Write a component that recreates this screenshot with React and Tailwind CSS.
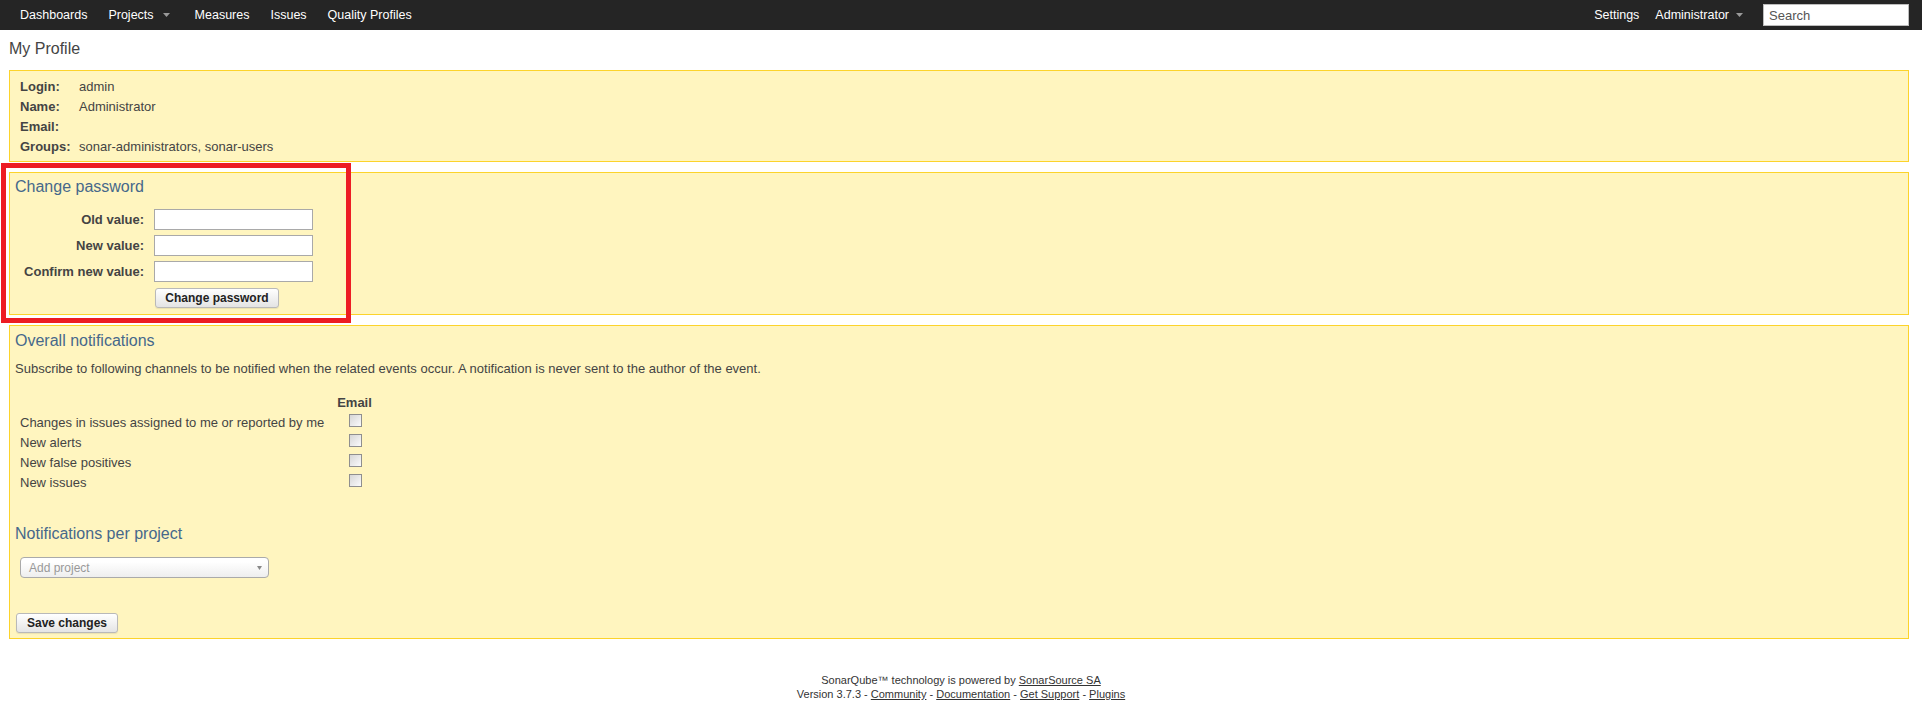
import React from "react";

function Caret({ className = "" }) {
  return (
    <svg width="7" height="4" viewBox="0 0 7 4" className={className}>
      <path d="M0 0H7L3.5 4Z" fill="#9a9a9a" />
    </svg>
  );
}

function Panel({ className = "", children }) {
  return (
    <div className={"border border-[#fcd32b] bg-[#fff5bf] " + className}>
      {children}
    </div>
  );
}

function Btn({ children, className = "" }) {
  return (
    <button
      type="button"
      className={
        "h-[20px] rounded-[3px] border border-[#b9b9b9] bg-[linear-gradient(#ffffff,#e4e4e4)] text-[12px] font-bold leading-[18px] text-[#222] shadow-[0_1px_1px_rgba(0,0,0,0.08)] " +
        className
      }
    >
      {children}
    </button>
  );
}

function Check() {
  return (
    <span className="mt-[1px] block h-[13px] w-[13px] border border-[#8f8f8f] bg-[linear-gradient(135deg,#d6d6d6,#fbfbfb)]" />
  );
}

export default function App() {
  const info = [
    ["Login:", "admin"],
    ["Name:", "Administrator"],
    ["Email:", ""],
    ["Groups:", "sonar-administrators, sonar-users"],
  ];
  const rows = [
    "Changes in issues assigned to me or reported by me",
    "New alerts",
    "New false positives",
    "New issues",
  ];
  return (
    <div className="relative min-h-[708px] bg-white font-['Liberation_Sans',Arial,sans-serif] text-[13px] text-[#444]">
      {/* Top navigation */}
      <nav className="flex h-[30px] items-center bg-[#252525] text-[12.5px] text-white">
        <div className="flex items-center pl-[20px]">
          <span>Dashboards</span>
          <span className="ml-[21px] flex items-center">
            Projects
            <Caret className="ml-[9px]" />
          </span>
          <span className="ml-[25px]">Measures</span>
          <span className="ml-[21px]">Issues</span>
          <span className="ml-[21px]">Quality Profiles</span>
        </div>
        <div className="ml-auto flex items-center pr-[13px]">
          <span>Settings</span>
          <span className="ml-[16px] flex items-center">
            Administrator
            <Caret className="ml-[7px]" />
          </span>
          <input
            placeholder="Search"
            className="ml-[20px] h-[22px] w-[146px] border border-[#bdbdbd] bg-white px-[5px] text-[13px] text-[#333] outline-none placeholder:text-[#555]"
          />
        </div>
      </nav>

      <h1 className="ml-[9px] mt-[9px] text-[16px] leading-[20px] text-[#444]">My Profile</h1>

      <div className="ml-[9px] mr-[13px] mt-[11px]">
        {/* Info panel */}
        <Panel className="pb-[4px] pl-[10px] pt-[6px]">
          {info.map(([k, v]) => (
            <div key={k} className="flex h-[20px] items-center leading-[20px]">
              <span className="w-[59px] font-bold">{k}</span>
              <span>{v}</span>
            </div>
          ))}
        </Panel>

        {/* Change password */}
        <Panel className="mt-[10px] pb-[6px] pl-[5px] pt-[4px]">
          <h2 className="text-[16px] leading-[20px] text-[#46688b]">Change password</h2>
          <div className="mt-[12px] flex flex-col gap-[5px] pl-[5px]">
            {["Old value:", "New value:", "Confirm new value:"].map((l) => (
              <div key={l} className="flex h-[21px] items-center">
                <span className="w-[124px] text-right font-bold">{l}</span>
                <input className="ml-[10px] h-[21px] w-[159px] border border-[#a9a9a9] bg-white outline-none" />
              </div>
            ))}
          </div>
          <div className="mt-[6px] pl-[140px]">
            <Btn className="w-[124px]">Change password</Btn>
          </div>
        </Panel>

        {/* Notifications */}
        <Panel className="mt-[10px] pb-[5px] pl-[5px] pt-[5px]">
          <h2 className="text-[16px] leading-[20px] text-[#46688b]">Overall notifications</h2>
          <p className="mt-[10px] leading-[16px]">
            Subscribe to following channels to be notified when the related events occur. A notification is never sent to the author of the event.
          </p>
          <div className="mt-[15px] pl-[5px]">
            <div className="grid grid-cols-[313px_43px]">
              <div className="h-[21px]" />
              <div className="flex h-[21px] items-center justify-center font-bold">Email</div>
              {rows.map((r) => (
                <React.Fragment key={r}>
                  <div className="h-[20px] leading-[20px]">{r}</div>
                  <div className="flex h-[20px] items-start justify-center pl-[1px]">
                    <Check />
                  </div>
                </React.Fragment>
              ))}
            </div>
          </div>

          <h2 className="mt-[31px] text-[16px] leading-[20px] text-[#46688b]">Notifications per project</h2>
          <div className="mt-[13px] pl-[5px]">
            <div className="flex h-[21px] w-[249px] items-center justify-between rounded-[4px] border border-[#aaa] bg-[linear-gradient(#ffffff_20%,#eeeeee)] pl-[8px] pr-[6px] text-[12px] text-[#999]">
              <span>Add project</span>
              <svg width="5" height="4" viewBox="0 0 5 4">
                <path d="M0 0H5L2.5 4Z" fill="#888" />
              </svg>
            </div>
          </div>
          <div className="mt-[35px] pl-[1px]">
            <Btn className="w-[102px]">Save changes</Btn>
          </div>
        </Panel>
      </div>

      {/* Footer */}
      <footer className="mt-[34px] text-center text-[11px] leading-[14px] text-[#333]">
        <div>
          SonarQube™ technology is powered by <a className="underline">SonarSource SA</a>
        </div>
        <div>
          Version 3.7.3 - <a className="underline">Community</a> - <a className="underline">Documentation</a> -{" "}
          <a className="underline">Get Support</a> - <a className="underline">Plugins</a>
        </div>
      </footer>

      {/* Red annotation rectangle */}
      <div className="pointer-events-none absolute left-[1px] top-[163px] h-[160px] w-[350px] border-[5px] border-[#ed1c24]" />
    </div>
  );
}
